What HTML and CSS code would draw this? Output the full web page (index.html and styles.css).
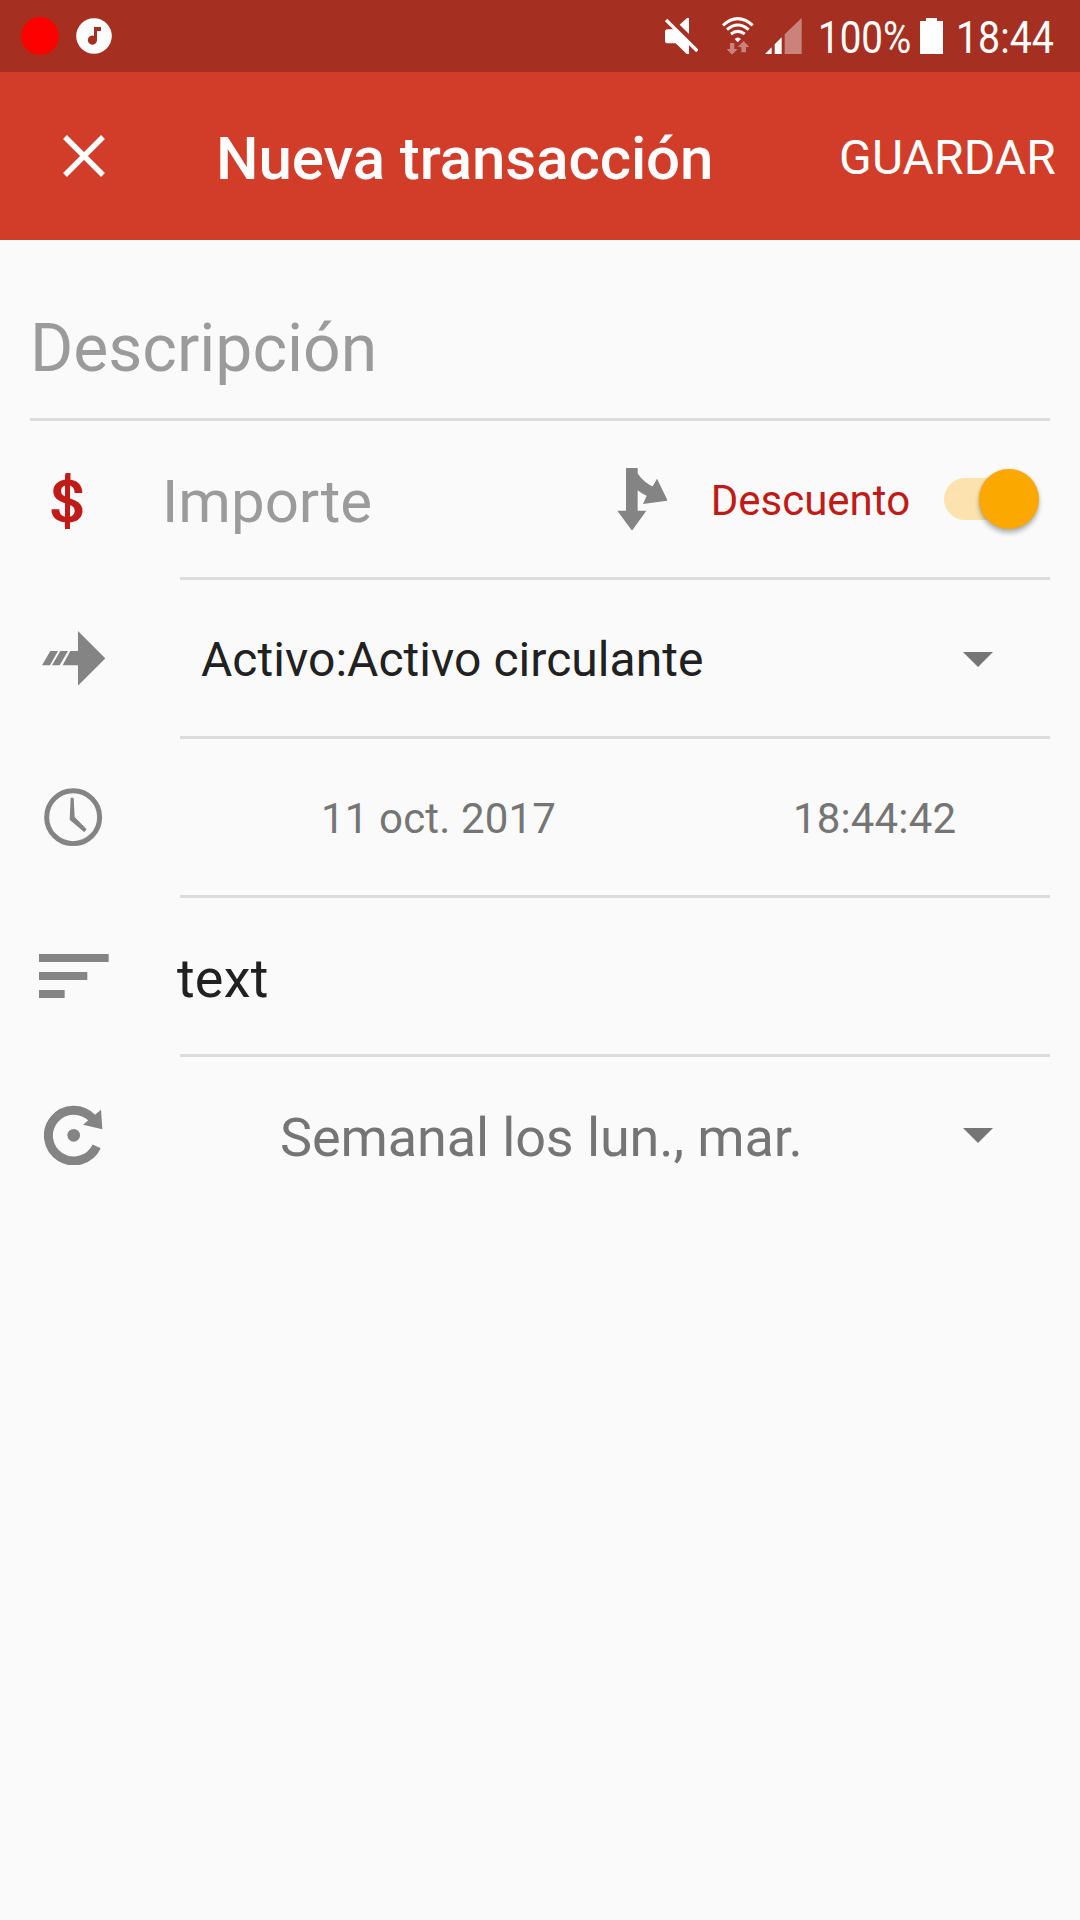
FILE: index.html
```html
<!DOCTYPE html>
<html lang="es">
<head>
<meta charset="utf-8">
<title>Nueva transacción</title>
<link rel="stylesheet" href="styles.css">
</head>
<body>
<div class="status">
  <span class="record"></span>
  <svg class="music" viewBox="0 0 36 36"><circle cx="18" cy="18" r="17.8" fill="#fff"/><path d="M18 9h7v4h-4v9a4.6 4.6 0 1 1-3-4.200z" fill="#a53021"/></svg>
  <svg class="mute" viewBox="75 54 99 108" fill="#fff"><path d="M147 54h-6l-22 20 28 28z"/><path d="M75 92l5-4h24l43 42v32h-7l-33-32H80l-5-4z"/><path d="M78 60l94 93" stroke="#fff" stroke-width="10"/></svg>
  <svg class="wifi" viewBox="245 50 96 114"><g fill="none" stroke="#fff" stroke-width="9"><path d="M248 75q44-40 89 0"/><path d="M260 88q32-28 65 0"/><path d="M272 101q20-16 41 0"/></g><path d="M283 116q9-9 19 0l-10 10z" fill="#fff"/><path d="M269 128h13v18h10l-17 17-16-17h10zM310 122l17 18h-10v16h-14v-16h-11z" fill="#c9837a"/></svg>
  <svg class="signal" viewBox="376 54 110 108" fill="#fff"><path d="M376 162l20-20v20zM405 162v-29l21-21v50z"/><path d="M435 162v-59l51-49v108z" fill="#c9837a"/></svg>
  <span class="level"><span class="narrow">100%</span></span>
  <svg class="battery" viewBox="840 54 70 109" fill="#fff"><path d="M858 54h33v9h19v100h-70V63h18z"/></svg>
  <span class="clock"><span class="narrow">18:44</span></span>
</div>
<header class="bar">
  <svg class="close" viewBox="0 0 42 42"><path d="M2 2l38 38M40 2L2 40" stroke="#fff" stroke-width="5.400"/></svg>
  <h1 class="title">Nueva transacción</h1>
  <span class="save">GUARDAR</span>
</header>
<main class="form">
  <div class="description">Descripción</div>
  <div class="row">
    <span class="currency"><span class="sign">$</span></span>
    <div class="field amount">
      <span class="hint">Importe</span>
      <svg class="split" viewBox="110 82 152 188" fill="#848484"><path d="M137 82h35v16c10 16 26 31 45 39l13-23 32 66-74 10 11-25c-10-3-19-10-27-16v61h26l-43 60-44-60h26z"/></svg>
      <span class="kind">Descuento</span>
      <span class="switch"><span class="thumb"></span></span>
    </div>
  </div>
  <div class="row">
    <div class="lead"><svg class="transfer" viewBox="126 92 190 164" fill="#848484"><path d="M151 152h23l-24 43h-24zM181 152h23l-25 43h-23zM211 152h23V92l82 82-82 82v-61h-46z"/></svg></div>
    <div class="field"><span class="account">Activo:Activo circulante</span><svg class="caret" viewBox="0 0 30 15"><path d="M0 0h30L15 15z" fill="#757575"/></svg></div>
  </div>
  <div class="row">
    <div class="lead"><svg class="time-icon" viewBox="133 563 175 175"><circle cx="220.500" cy="650.500" r="79.500" fill="none" stroke="#848484" stroke-width="15"/><path d="M213 592h9l3 58 36 37-7 9-44-38z" fill="#848484"/></svg></div>
    <div class="field when"><span class="date">11 oct. 2017</span><span class="time">18:44:42</span></div>
  </div>
  <div class="row">
    <div class="lead"><svg class="notes-icon" viewBox="116 162 210 132" fill="#848484"><path d="M116 162h209v24H116zM116 216h145v24H116zM116 270h77v24h-77z"/></svg></div>
    <div class="field"><span class="note">text</span></div>
  </div>
  <div class="row last">
    <div class="lead"><svg class="repeat-icon" viewBox="133 614 176 182"><path d="M278 654A76 76 0 1 0 291 738" fill="none" stroke="#848484" stroke-width="27"/><path d="M304 628l4 59-58-14z" fill="#848484"/><circle cx="222" cy="705" r="19" fill="#848484"/></svg></div>
    <div class="field"><span class="recurrence">Semanal los lun., mar.</span><svg class="caret" viewBox="0 0 30 15"><path d="M0 0h30L15 15z" fill="#757575"/></svg></div>
  </div>
</main>
</body>
</html>
```
FILE: styles.css
```css
* { box-sizing: border-box; }
body {
  margin: 0;
  min-height: 1920px;
  background: #fafafa;
  color: #212121;
  font-family: Roboto, "Liberation Sans", sans-serif;
  white-space: nowrap;
}
svg { display: block; flex: none; }
span { flex: none; }

.status {
  display: flex;
  align-items: center;
  height: 72px;
  padding-left: 21px;
  background: #a53021;
  color: #fff;
  font-size: 45px;
}
.record { width: 38px; height: 38px; border-radius: 50%; background: #f00; }
.music { width: 36px; height: 36px; margin-left: 17px; }
.mute { width: 33px; height: 36px; margin-left: 553px; }
.wifi { width: 32px; height: 38px; margin-left: 23.700px; }
.signal { width: 36.700px; height: 36px; margin-left: 11.600px; }
.level { width: 102px; margin-left: 16px; padding-top: 3px; }
.battery { width: 23.300px; height: 36.300px; }
.clock { margin-left: 13.200px; padding-top: 3px; }
.narrow { display: inline-block; transform: scaleX(.873); transform-origin: 0 50%; }
.level .narrow { transform: scaleX(.857); }

.bar {
  display: flex;
  align-items: center;
  height: 168px;
  padding: 0 24px 0 63px;
  background: #d13d29;
  color: #fff;
}
.close { width: 42px; height: 42px; }
.title { margin: 0 0 0 111px; padding-top: 5px; font-size: 60px; font-weight: 500; letter-spacing: -.08px; }
.save { margin-left: auto; padding-top: 3px; font-size: 48px; letter-spacing: .12px; }

.form { padding: 0 30px; }
.description {
  display: flex;
  align-items: center;
  height: 181px;
  padding-top: 38px;
  border-bottom: 3px solid #dcdcdc;
  color: #9b9b9b;
  font-size: 66px;
}
.row { display: flex; height: 159px; }
.lead {
  display: flex;
  align-items: center;
  justify-content: center;
  width: 87px;
  height: 156px;
  margin-right: 63px;
}
.field {
  display: flex;
  align-items: center;
  flex: 1;
  border-bottom: 3px solid #dcdcdc;
}
.last .field { border-color: transparent; }
.currency {
  position: relative;
  display: flex;
  align-items: center;
  width: 150px;
  height: 156px;
  padding: 5px 0 0 20px;
  color: #c01b17;
  font-size: 60px;
  font-weight: 500;
}
.sign { transform: scaleX(1.1); }
/* full-height stroke of the currency sign */
.currency::after {
  content: "";
  position: absolute;
  top: 54px;
  left: 34.500px;
  width: 5.500px;
  height: 54px;
  background: currentColor;
}
.hint { width: 454.500px; margin-left: -18px; padding-top: 5px; color: #9b9b9b; font-size: 60px; }
.split { width: 50.700px; height: 62.700px; }
.kind { width: 233px; margin-left: 43.500px; padding-top: 3px; color: #c01b17; font-size: 42px; }
.switch {
  position: relative;
  width: 90px;
  height: 42px;
  border-radius: 21px;
  background: #fce2ae;
}
.thumb {
  position: absolute;
  top: -9.500px;
  left: 35.500px;
  width: 60px;
  height: 60px;
  border-radius: 50%;
  background: #fba800;
  box-shadow: 0 4px 5px rgba(0, 0, 0, .28), 0 0 3px rgba(0, 0, 0, .12);
}
.transfer { width: 63.300px; height: 54.700px; }
.time-icon { width: 58.300px; height: 58.300px; }
.notes-icon { width: 70px; height: 44px; }
.repeat-icon { width: 58.700px; height: 60.700px; }
.account { margin-left: 21px; padding-top: 3px; font-size: 48px; letter-spacing: .05px; }
.caret { width: 30px; height: 15px; margin: 2px 57px 0 auto; }
.when { color: #757575; font-size: 42px; letter-spacing: .15px; }
.date { width: 472px; margin-left: 141px; padding-top: 3px; }
.time { padding-top: 3px; }
.note { margin-left: -3px; padding-top: 5px; font-size: 54px; letter-spacing: .2px; }
.recurrence { margin-left: 100px; padding-top: 5px; color: #757575; font-size: 54px; letter-spacing: -.12px; }
.last .caret { margin-top: 1px; }
```
